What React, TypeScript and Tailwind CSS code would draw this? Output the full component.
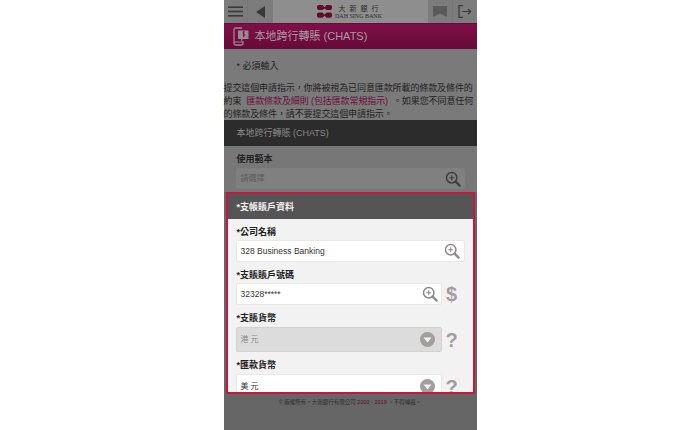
import React from 'react'

const CJK = "font-['Liberation_Sans','Noto_Sans_CJK_TC',sans-serif]"

const Magnifier = ({ color = '#8f8a8a' }: { color?: string }) => (
  <svg width="16" height="16" viewBox="0 0 16 16" fill="none" stroke={color}>
    <circle cx="6.7" cy="6.7" r="5.2" strokeWidth="1.5" />
    <path d="M4.2 6.7h5M6.7 4.2v5" strokeWidth="1.1" />
    <path d="M10.6 10.6l4 4" strokeWidth="2.3" strokeLinecap="round" />
  </svg>
)

const Chevron = () => (
  <span className="flex h-[15px] w-[15px] items-center justify-center rounded-full bg-[#a39d9d]">
    <svg width="9" height="6" viewBox="0 0 9 6">
      <path d="M0.5 0.5h8L4.5 5.5z" fill="#f2f2f2" />
    </svg>
  </span>
)

const Side = ({ children }: { children: string }) => (
  <span className="w-[20px] text-center text-[20px] leading-none font-bold text-[#a39d9d] font-['Liberation_Sans',sans-serif]">{children}</span>
)

const Label = ({ children }: { children: string }) => (
  <div className="h-[13px] pt-[1px] pl-[1px] text-[9px] leading-[13px] font-bold text-[#222]">{children}</div>
)

export default function App() {
  return (
    <div className={`flex h-[430px] w-[700px] justify-center overflow-hidden bg-white ${CJK}`}>
      <div className="flex h-[430px] w-[253px] flex-col bg-[#666]">
        <header className="flex h-[23px] shrink-0 bg-[#8e8e8e]">
          <div className="flex w-[24px] items-center justify-center border-r border-[#767676] bg-[#7c7c7c]">
            <svg width="15" height="11" viewBox="0 0 15 11" fill="#3a3a3a">
              <rect width="15" height="1.6" y="0.4" />
              <rect width="15" height="1.6" y="4.7" />
              <rect width="15" height="1.6" y="9" />
            </svg>
          </div>
          <div className="flex w-[25px] items-center justify-center bg-[#7c7c7c]">
            <svg width="9" height="12" viewBox="0 0 9 12">
              <path d="M9 0v12L0 6z" fill="#383838" />
            </svg>
          </div>
          <div className="flex flex-1 items-center justify-center gap-[3px] pr-[1px]">
            <svg width="15" height="13" viewBox="0 0 15 13" fill="#5e0c2c">
              <path d="M2 0h3.500L7.500 2.200 9.500 0H13c1.200 0 2 .8 2 2v1c0 1.200-.8 2-2 2H9.800L7.500 3.500 5.200 5H2C.8 5 0 4.200 0 3V2C0 .8.8 0 2 0z" />
              <path d="M2 7.500h3.200L7.500 9.500 9.800 7.500H13c1.200 0 2 .8 2 2v1.300c0 1.200-.8 2-2 2H9.500L7.500 10.800 5.500 12.800H2c-1.200 0-2-.8-2-2V9.500c0-1.200.8-2 2-2z" />
            </svg>
            <div className="flex flex-col items-center text-[#2b2b2b]">
              <span className="text-[7px] leading-[9px] tracking-[4px] pl-[4px]">大新銀行</span>
              <span className="font-['Liberation_Serif',serif] text-[6px] leading-[7px] whitespace-nowrap">DAH SING BANK</span>
            </div>
          </div>
          <div className="flex w-[25px] items-center justify-center border-r border-[#767676] bg-[#7c7c7c]">
            <svg width="14" height="11" viewBox="0 0 14 11">
              <path d="M0 0h14v11L7 7.500 0 11z" fill="#5a5a5a" />
            </svg>
          </div>
          <div className="flex w-[24px] items-center justify-center bg-[#7c7c7c]">
            <svg width="14" height="13" viewBox="0 0 14 13" fill="none" stroke="#3a3a3a" strokeWidth="1.200">
              <path d="M5 .7H1v11.600h4M4.500 6.500h8M10 4l2.700 2.500L10 9" />
            </svg>
          </div>
        </header>

        <div className="flex h-[26px] shrink-0 items-center gap-[6px] border-t border-[#6d0a3c] bg-gradient-to-b from-[#7f0f47] to-[#660b38] pl-[9px]">
          <svg width="16" height="20" viewBox="0 0 16 20" fill="none" stroke="#9a8a92">
            <path d="M9 1H2.500C1.500 1 1 1.600 1 2.500v14C1 17.500 1.600 18 2.500 18h6c1 0 1.500-.5 1.500-1.500V14" strokeWidth="1.300" />
            <path d="M1 15h9" strokeWidth="1" />
            <path d="M5 3.500h10.500v8.500H10l-2 2.500V12H5z" fill="#9a8a92" stroke="none" />
            <path d="M11.800 5c-2-.5-2.400 1.700-.8 2 1.800.4 1.400 2.500-.8 2M10.500 4.300v5.500" stroke="#7a0c42" strokeWidth="0.900" />
          </svg>
          <span className="text-[11px] text-[#aa9aa2]">本地跨行轉賬 (CHATS)</span>
        </div>

        <div className="h-[71px] shrink-0 bg-[#7a7a7a] text-[9px] leading-[13px] text-[#222]">
          <div className="pt-[11px] pl-[13px]">* 必須輸入</div>
          <p className="mt-[9px] w-[253px] tracking-[-0.1px]">
            提交這個申請指示，你將被視為已同意匯款所載的條款及條件的約束<span className="mx-[5px] text-[#6d0a3c]">匯款條款及細則 (包括匯款常規指示)</span>。如果您不同意任何的條款及條件，請不要提交這個申請指示。
          </p>
        </div>

        <div className="flex h-[26px] shrink-0 items-center bg-[#2c2c2c] pt-[2px] pl-[13px] text-[9px] text-[#8a8a8a]">本地跨行轉賬 (CHATS)</div>

        <div className="h-[46px] shrink-0 bg-[#777] pr-[12px] pl-[12px] pt-[6px]">
          <Label>使用範本</Label>
          <div className="mt-[3px] flex h-[21px] items-center justify-between rounded-[2px] border border-[#7f7f7f] bg-[#808080] pr-[3px] pl-[4px] text-[8px] text-[#5e5e5e]">
            請選擇
            <Magnifier color="#3f3d3d" />
          </div>
        </div>

        <section className="mx-[2px] h-[202px] shrink-0 overflow-hidden rounded-b-[2px] border-2 border-[#cc1440] bg-[#f2f2f2]">
          <div className="flex h-[25px] items-center bg-[#555] pt-[2px] pl-[9px] text-[9px] font-bold text-[#f2f2f2]">*支帳賬戶資料</div>
          <div className="pt-[6px] pr-[8px] pl-[8px]">
            <Label>*公司名稱</Label>
            <div className="mt-[2px] flex h-[22px] items-center justify-between rounded-[2px] border border-[#e8e8e8] bg-white pr-[4px] pl-[4px] text-[8.5px] text-[#333]">
              328 Business Banking
              <Magnifier />
            </div>
            <div className="mt-[6px]"><Label>*支賬賬戶號碼</Label></div>
            <div className="mt-[2px] flex items-center">
              <div className="flex h-[22px] w-[206px] items-center justify-between rounded-[2px] border border-[#e8e8e8] bg-white pr-[3px] pl-[4px] text-[8.5px] text-[#333]">
                32328*****
                <Magnifier />
              </div>
              <Side>$</Side>
            </div>
            <div className="mt-[6px]"><Label>*支賬貨幣</Label></div>
            <div className="mt-[3px] flex items-center">
              <div className="flex h-[25px] w-[206px] items-center justify-between rounded-[2px] border border-[#d2d2d2] bg-[#dcdcdc] pr-[6px] pl-[4px] text-[8px] tracking-[2px] text-[#8a8a8a]">
                港元
                <Chevron />
              </div>
              <Side>?</Side>
            </div>
            <div className="mt-[6px]"><Label>*匯款貨幣</Label></div>
            <div className="mt-[3px] flex items-center">
              <div className="flex h-[25px] w-[206px] items-center justify-between rounded-[2px] border border-[#e8e8e8] bg-white pr-[6px] pl-[4px] text-[8px] tracking-[2px] text-[#333]">
                美元
                <Chevron />
              </div>
              <Side>?</Side>
            </div>
          </div>
        </section>

        <div className="pt-[3px] text-center text-[5.5px] leading-[10px] text-[#2e2e2e]">
          © 版權所有。大新銀行有限公司 <span className="text-[#5e0c2c]">2000 - 2019</span> 。不得轉載。
        </div>
      </div>
    </div>
  )
}
